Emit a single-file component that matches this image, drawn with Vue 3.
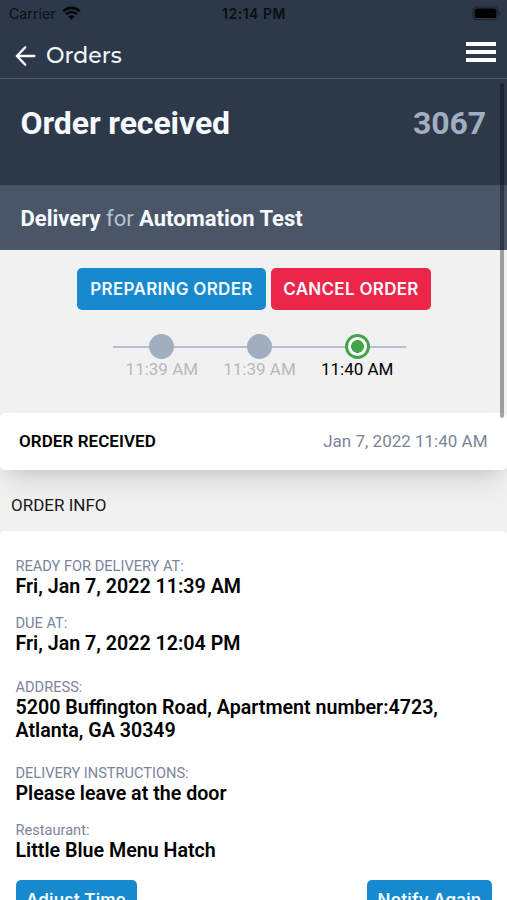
<script setup>
const steps = [
  { time: '11:39 AM', active: false },
  { time: '11:39 AM', active: false },
  { time: '11:40 AM', active: true },
]

const details = [
  { key: 'ready', label: 'READY FOR DELIVERY AT:', value: 'Fri, Jan 7, 2022 11:39 AM' },
  { key: 'due', label: 'DUE AT:', value: 'Fri, Jan 7, 2022 12:04 PM' },
  { key: 'address', label: 'ADDRESS:', value: '5200 Buffington Road, Apartment number:4723, Atlanta, GA 30349' },
  { key: 'instructions', label: 'DELIVERY INSTRUCTIONS:', value: 'Please leave at the door' },
  { key: 'restaurant', label: 'Restaurant:', value: 'Little Blue Menu Hatch' },
]
</script>

<template>
  <div class="screen">
    <header class="header">
      <div class="status">
        <div class="carrier">
          <span>Carrier</span>
          <svg class="wifi" width="19" height="15" viewBox="0 0 19 15">
            <path d="M1.2 5.3C6 .7 13 .7 17.8 5.3" />
            <path d="M4 8.3c3.2-3 7.8-3 11 0" />
            <path class="dot" d="M9.5 13.7 6.3 10.4c1.8-1.7 4.6-1.7 6.4 0z" />
          </svg>
        </div>
        <span class="clock">12:14 PM</span>
        <svg class="battery" width="30" height="15" viewBox="0 0 30 15">
          <rect class="shell" x="1" y="1" width="25" height="12.6" rx="3.6" />
          <rect x="2.6" y="2.6" width="21.8" height="9.4" rx="2" />
          <path class="tip" d="M27.4 5.2c1.9.7 1.9 3.6 0 4.3z" />
        </svg>
      </div>
      <nav class="nav">
        <a class="back">
          <svg width="22" height="22" viewBox="0 0 22 22">
            <path d="M19.4 11H2.2M10.2 2.4 1.8 11l8.4 8.6" />
          </svg>
          <span>Orders</span>
        </a>
        <div class="menu"><i></i><i></i><i></i></div>
      </nav>
    </header>

    <section class="summary">
      <h1>Order received</h1>
      <span class="number">3067</span>
    </section>
    <section class="recipient">
      <p><b>Delivery</b> for <b>Automation Test</b></p>
    </section>

    <div class="actions">
      <button class="btn primary">PREPARING ORDER</button>
      <button class="btn danger">CANCEL ORDER</button>
    </div>

    <div class="timeline">
      <div v-for="(step, i) in steps" :key="i" class="step" :class="{ active: step.active }">
        <div class="track">
          <span class="line"></span>
          <span class="node"></span>
          <span class="line"></span>
        </div>
        <span class="time">{{ step.time }}</span>
      </div>
    </div>

    <div class="event">
      <b>ORDER RECEIVED</b>
      <span>Jan 7, 2022 11:40 AM</span>
    </div>

    <h2 class="heading">ORDER INFO</h2>

    <section class="info">
      <dl v-for="item in details" :key="item.key" class="field" :class="item.key">
        <dt>{{ item.label }}</dt>
        <dd>{{ item.value }}</dd>
      </dl>
      <div class="footer">
        <button class="small adjust">Adjust Time</button>
        <button class="small notify">Notify Again</button>
      </div>
    </section>
    <span class="scrollbar"></span>
  </div>
</template>

<style>
body { margin: 0; overflow: hidden; }
</style>

<style scoped>
.screen {
  position: relative;
  width: 507px;
  height: 900px;
  overflow: hidden;
  box-sizing: border-box;
  background: #f1f1f1;
  color: #000;
  font-family: Roboto, sans-serif;
}
.header {
  height: 79px;
  box-sizing: border-box;
  background: #2d3848;
  border-bottom: 1px solid #4c5b6a;
}
.status {
  display: grid;
  grid-template-columns: 1fr auto 1fr;
  align-items: center;
  height: 27px;
  padding: 0 8px 0 9px;
  font-family: Inter, sans-serif;
  font-size: 14px;
  color: #0a0e14;
}
.carrier { display: flex; align-items: center; gap: 6px; letter-spacing: 0.1px; }
.wifi { fill: none; stroke: #05070a; stroke-width: 2.6; }
.wifi .dot { fill: #05070a; stroke: none; }
.clock { font-weight: 600; letter-spacing: 0.5px; }
.battery { justify-self: end; margin-right: -3px; fill: #000; }
.battery .shell { fill: none; stroke: #1d242e; stroke-width: 1.2; }
.battery .tip { fill: #1d242e; }
.nav {
  display: flex;
  justify-content: space-between;
  height: 51px;
  padding: 0 11px 0 15px;
}
.back {
  display: flex;
  align-items: center;
  gap: 9px;
  height: 57px;
  color: #f2f8ff;
  font-family: Montserrat, Inter, sans-serif;
  font-size: 22px;
  font-weight: 500;
}
.back svg { fill: none; stroke: #f8fbff; stroke-width: 2.3; stroke-linecap: round; stroke-linejoin: round; }
.menu { display: flex; flex-direction: column; gap: 4.2px; width: 30px; padding-top: 15px; }
.menu i { height: 4px; background: #fff; }
.summary {
  display: flex;
  justify-content: space-between;
  height: 106px;
  box-sizing: border-box;
  padding: 24px 21px 0 20.5px;
  background: #2d3848;
}
h1, .number { margin: 0; font-size: 32px; line-height: 40px; font-weight: 700; letter-spacing: -0.1px; }
h1 { color: #f5faff; }
.number { color: #a0aec0; }
.recipient {
  display: flex;
  align-items: center;
  height: 65px;
  padding-left: 20.5px;
  background: #4a5568;
  color: #b5c1d2;
  font-size: 22px;
}
.recipient p { margin: 0; padding-top: 1px; }
.recipient b { color: #f5faff; font-weight: 700; }
.actions { display: flex; justify-content: center; gap: 5px; padding-top: 18px; padding-left: 1px; }
.btn {
  height: 42px;
  padding: 0;
  border: 0;
  border-radius: 5px;
  color: #f5faff;
  font: 600 17px/42px Inter, sans-serif;
  letter-spacing: 0.3px;
}
.primary { width: 189px; background: #178acf; }
.danger { width: 160px; background: #eb2649; }
.timeline { display: flex; width: 293px; margin: 24px 0 0 113px; }
.step { flex: 1; color: #b9b9b9; text-align: center; }
.track { display: flex; align-items: center; }
.line { flex: 1; height: 2px; background: #b6bfcd; }
.node { width: 25px; height: 25px; border-radius: 50%; background: #a0aec0; }
.time { display: block; font-size: 17px; line-height: 20px; white-space: nowrap; }
.active { color: #000; }
.active .node {
  box-sizing: border-box;
  border: 3px solid #43a349;
  background: radial-gradient(circle, #43a349 6px, #fff 6.8px);
}
.event {
  display: flex;
  justify-content: space-between;
  align-items: center;
  height: 57px;
  box-sizing: border-box;
  margin-top: 34px;
  padding: 0 19.5px 2px 19px;
  border-radius: 5px;
  background: #fff;
  box-shadow: 0 22px 30px -8px rgba(0, 0, 0, 0.09), 0 6px 16px -5px rgba(0, 0, 0, 0.12);
  font-size: 17px;
}
.event b { font-weight: 600; letter-spacing: 0.07px; }
.event span { color: #7b8499; }
.heading { position: relative; margin: 0; padding: 25px 11px 15px; font-size: 17px; line-height: 21px; font-weight: 400; color: #181818; }
.info {
  position: relative;
  height: 400px;
  box-sizing: border-box;
  padding: 26px 15px 0 15.5px;
  border-radius: 5px 5px 0 0;
  background: #fff;
}
.field { margin: 0 0 16px; }
.field.due { margin-bottom: 23px; }
.field.address { margin-bottom: 22px; }
.field.restaurant { margin-bottom: 18px; }
dt { font-size: 14.6px; line-height: 18px; color: #7b8499; }
dd { margin: 0; font-size: 19.65px; line-height: 23px; font-weight: 600; }
.footer { display: flex; justify-content: space-between; }
.small {
  height: 40px;
  padding: 0;
  border: 0;
  border-radius: 5px;
  background: #178acf;
  color: #f5faff;
  font: 600 17px/40px Inter, sans-serif;
  letter-spacing: 0.15px;
}
.adjust { width: 121px; }
.notify { width: 125px; }
.scrollbar { position: absolute; top: 83px; right: 3.5px; width: 4px; height: 335px; border-radius: 2px; background: rgba(0, 0, 0, 0.35); }
</style>
